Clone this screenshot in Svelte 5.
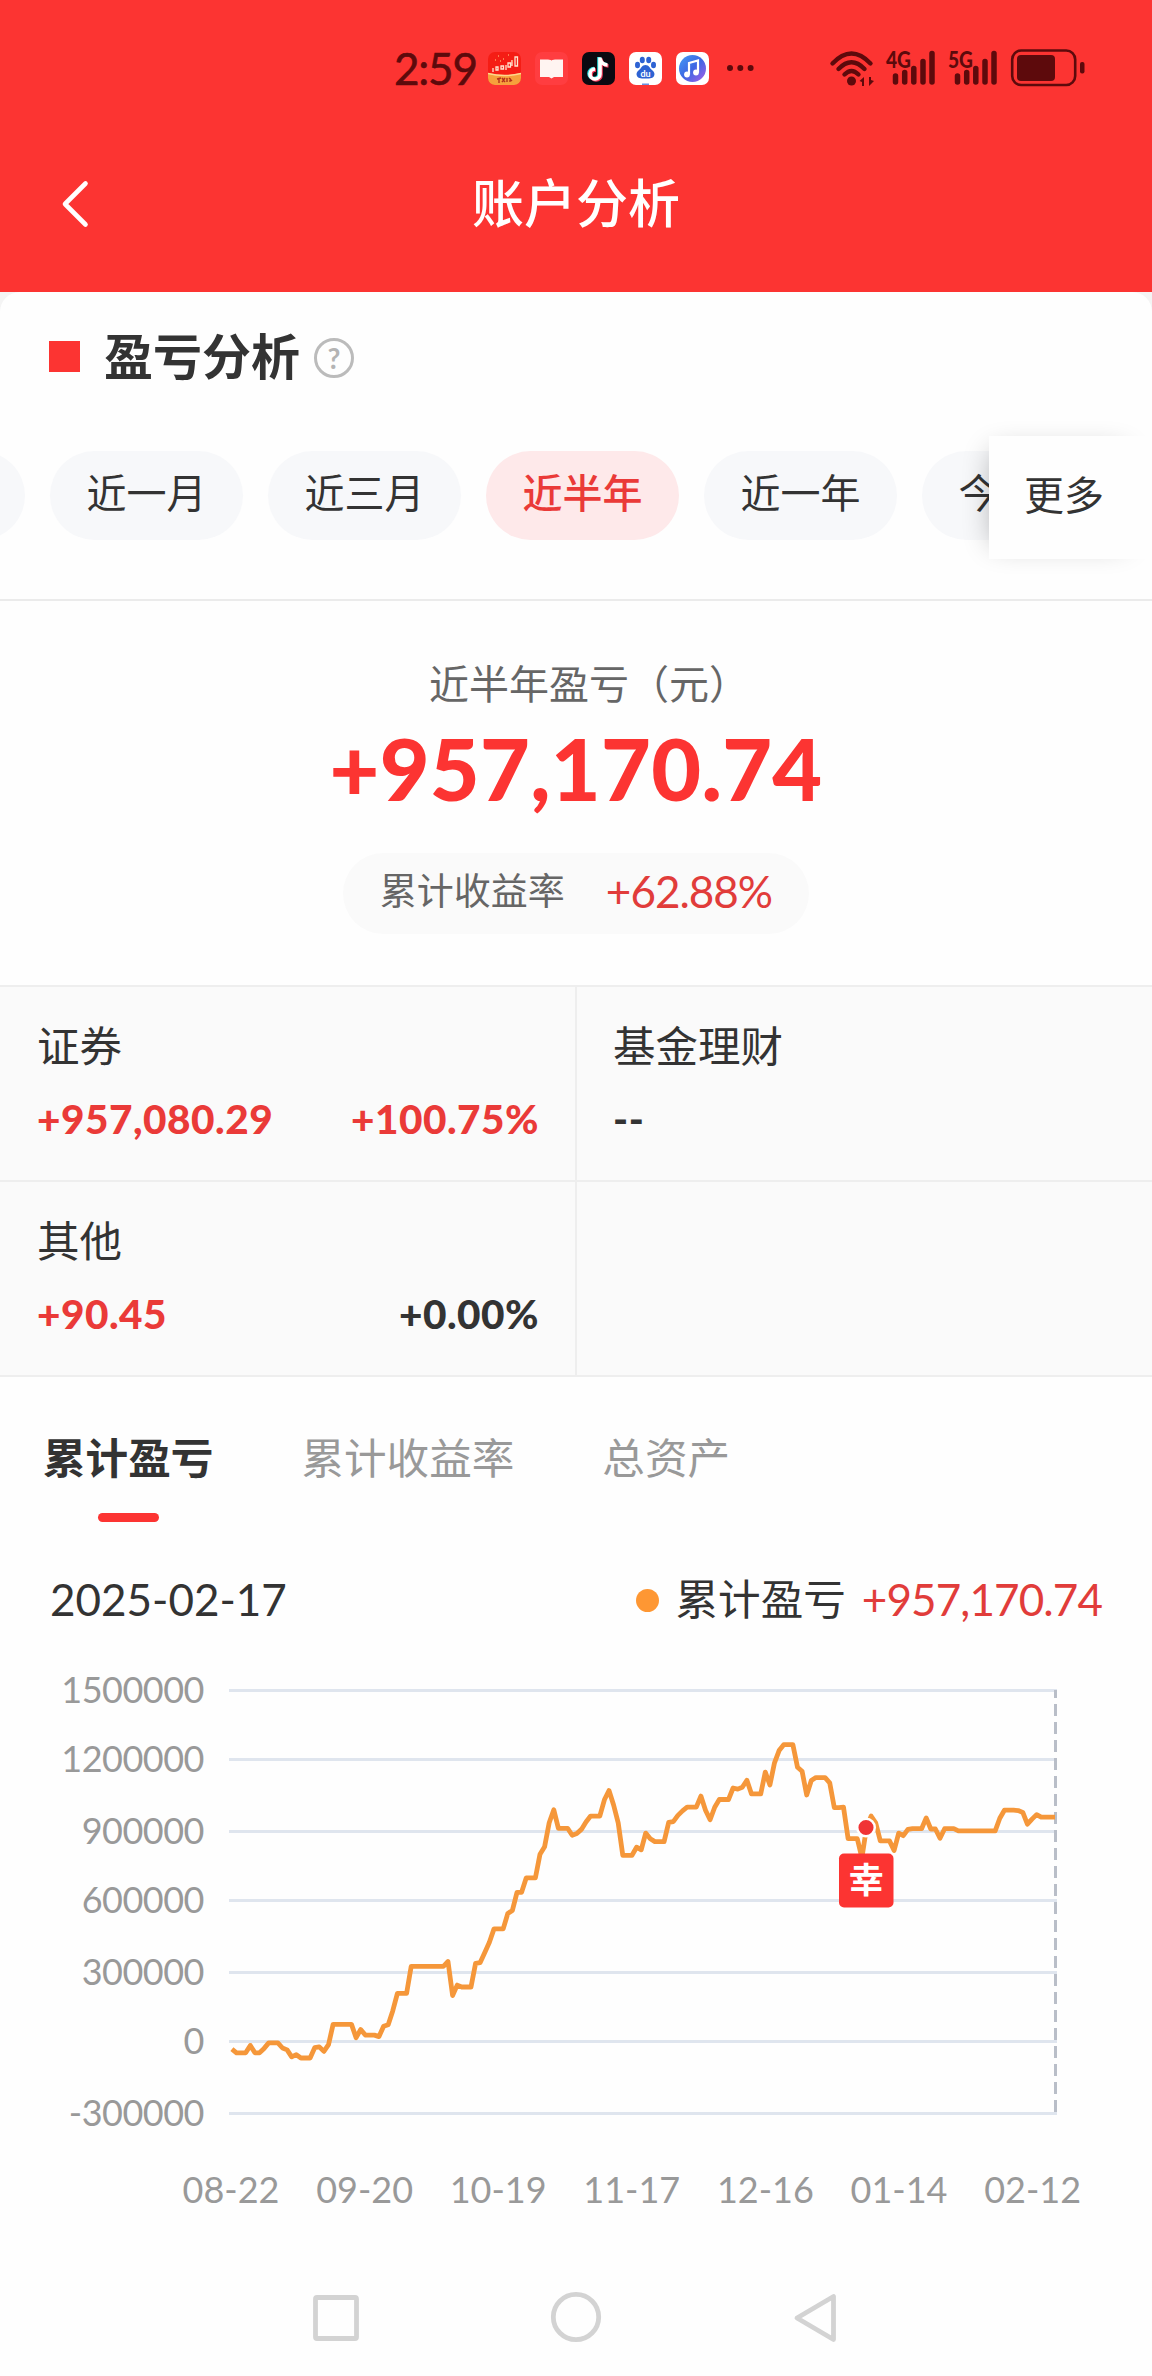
<script>
  const ranges = [
    { label: '' },
    { label: '近一月' },
    { label: '近三月' },
    { label: '近半年', active: true },
    { label: '近一年' },
    { label: '今年来' }
  ];

  const cells = [
    { name: '证券', amount: '+957,080.29', rate: '+100.75%', up: true, rateUp: true },
    { name: '基金理财', amount: '--' },
    { name: '其他', amount: '+90.45', rate: '+0.00%', up: true },
    null
  ];

  const tabs = ['累计盈亏', '累计收益率', '总资产'];

  const yTicks = [
    { label: '1500000', y: 30.5 },
    { label: '1200000', y: 99.5 },
    { label: '900000', y: 171.5 },
    { label: '600000', y: 240.5 },
    { label: '300000', y: 312.5 },
    { label: '0', y: 381.5 },
    { label: '-300000', y: 453.5 }
  ];
  const xTicks = ['08-22', '09-20', '10-19', '11-17', '12-16', '01-14', '02-12'];

  // One level per day, measured downwards from the top of the chart.
  const levels = [
    1052, 1062, 1062, 1062, 1042, 1062, 1062, 1050, 1035, 1035, 1035, 1049, 1054, 1073, 1067, 1076, 1076, 1076,
    1048, 1046, 1058, 1040, 985, 985, 985, 985, 985, 1021, 999, 1014, 1014, 1014, 1018, 990, 986, 948, 901, 901,
    901, 828, 828, 828, 828, 828, 828, 828, 828, 815, 907, 879, 884, 884, 884, 820, 818, 791, 763, 727, 727, 727,
    685, 677, 628, 628, 589, 589, 589, 525, 505, 440, 405, 455, 455, 455, 474, 469, 458, 438, 422, 422, 422, 378,
    353, 392, 440, 528, 528, 528, 506, 513, 468, 483, 491, 491, 491, 439, 437, 420, 408, 398, 398, 398, 368, 406,
    432, 398, 377, 377, 377, 346, 349, 344, 325, 362, 362, 362, 303, 338, 278, 245, 229, 229, 229, 290, 301, 365,
    326, 318, 318, 318, 332, 399, 399, 398, 483, 483, 483, 535, 453, 422, 440, 489, 489, 489, 515, 468, 475, 458,
    456, 456, 456, 427, 457, 457, 482, 456, 456, 456, 462, 462, 462, 462, 462, 462, 462, 462, 462, 428, 406, 406,
    406, 407, 412, 444, 430, 418, 425, 425, 425, 425
  ];
  const left = 231.9;
  const step = (1055 - left) / (levels.length - 1);
  const line = levels.map((v, i) => `${(left + i * step).toFixed(1)},${(v / 2.7034).toFixed(1)}`).join(' ');
</script>

{#snippet signal(kind)}
  <svg class="signal" width="52" height="36" viewBox="0 0 52 36">
    <text x="0" y="17.5" textLength="25" lengthAdjust="spacingAndGlyphs">{kind}</text>
    <path d="M9.500 26v6M18.700 22.500v9.500M27.800 18.500v13.500M37 11.500v20.500M46 3.500v28.500" />
  </svg>
{/snippet}

<div class="page">
  <header>
    <div class="status">
      <span class="time">2:59</span>
      <div class="apps">
        <svg width="33" height="33" viewBox="0 0 33 33">
          <defs><clipPath id="r"><rect width="33" height="33" rx="7" /></clipPath></defs>
          <g clip-path="url(#r)">
            <rect width="33" height="33" fill="#f51d15" />
            <path d="M0 21Q16 25 33 21V33H0Z" fill="#f6a13c" />
            <path d="M0 21.500Q16 25.500 33 21.500" fill="none" stroke="#ffd68c" stroke-width="1.500" />
            <g fill="none" stroke="#ffe4cf" stroke-width="1.300">
              <path d="M5 16v4M8 15h2v3h-2zM13 14h2.500v3h-2.500zM18 13v5M20 11h2.500v4h-2.500zM24 8v6M27 5h2.500v9h-2.500z" />
            </g>
            <path d="M9 27l4-1m-2 0v5m3-5l3 4m0-4l-3 4m5-4v4m2-4l3 3m-2-3v4" stroke="#b3301b" stroke-width="1.400" fill="none" />
            <path d="M10 4h1m4 3h1m4-4h1m-9 6h1m-6-1h1m16 1h1" stroke="#ff9a62" stroke-width="1.400" />
          </g>
        </svg>
        <svg width="33" height="33" viewBox="0 0 33 33">
          <rect width="33" height="33" rx="7" fill="#ff3d40" />
          <path d="M5 7.500h8q3.500 0 3.500 1.500q0-1.500 3.500-1.500h8V25h-9l-2.500 1.500L14 25H5z" fill="#fff4f1" />
        </svg>
        <svg width="33" height="33" viewBox="0 0 33 33">
          <rect width="33" height="33" rx="7" fill="#0b0911" />
          <g fill="none" stroke-width="3.600">
            <path d="M17 5v16.500a5 5 0 1 1-5-5M17 6q1 6 7.500 6.500" stroke="#2bdfe0" />
            <path d="M19 6.500V23a5 5 0 1 1-5-5M19 7.500q1 6 7.500 6.500" stroke="#f43b5c" />
            <path d="M18 5.500V22a5 5 0 1 1-5-5M18 6.500q1 6 7.500 6.500" stroke="#fff" />
          </g>
        </svg>
        <svg width="33" height="33" viewBox="0 0 33 33">
          <rect width="33" height="33" rx="7" fill="#fff" />
          <g fill="#2d62d3">
            <ellipse cx="8.500" cy="13" rx="2.500" ry="3.200" />
            <ellipse cx="13.300" cy="8" rx="2.500" ry="3.200" />
            <ellipse cx="19.700" cy="8" rx="2.500" ry="3.200" />
            <ellipse cx="24.500" cy="13" rx="2.500" ry="3.200" />
            <path d="M16.500 13c3.500 0 4 3 6.500 5s3 4 2 6-3 2.500-8.500 2.500S9 26 8 24s-.5-4 2-6 3-5 6.500-5z" />
            <rect x="13" y="31.500" width="7" height="1.500" opacity=".7" />
          </g>
          <text x="16.500" y="24.500" class="du">du</text>
        </svg>
        <svg width="33" height="33" viewBox="0 0 33 33">
          <defs>
            <linearGradient id="m" x1="0" y1="0" x2="1" y2="1">
              <stop offset="0" stop-color="#459bf5" /><stop offset=".5" stop-color="#3e66e3" /><stop offset="1" stop-color="#a85fe8" />
            </linearGradient>
          </defs>
          <rect width="33" height="33" rx="7" fill="#fff" />
          <circle cx="16.500" cy="16.500" r="13.500" fill="url(#m)" />
          <path d="M13 22.500V11l9-2.500v12" fill="none" stroke="#fff" stroke-width="2.200" />
          <circle cx="11" cy="22.500" r="2.900" fill="#fff" /><circle cx="20" cy="20.500" r="2.900" fill="#fff" />
        </svg>
        <svg class="dots" width="28" height="8" viewBox="0 0 28 8">
          <circle cx="4" cy="4" r="3" /><circle cx="14.300" cy="4" r="3" /><circle cx="24.600" cy="4" r="3" />
        </svg>
      </div>
      <div class="system">
        <svg class="wifi" width="46" height="36" viewBox="0 0 46 36">
          <g fill="none" stroke-width="4.400" stroke-linecap="round">
            <path d="M2.500 13.500Q21.500-6.500 40.500 13.500" />
            <path d="M8.500 19Q21.500 5.500 34.500 19" />
            <path d="M14.500 24.500Q21.500 17.500 28.500 24.500" />
          </g>
          <circle cx="21.500" cy="31" r="4.500" />
          <path d="M29.500 31l4.500-4v9h-2v-4zM44 31l-5 5v-9h2v3z" />
        </svg>
        {@render signal('4G')}
        {@render signal('5G')}
        <svg class="battery" width="76" height="38" viewBox="0 0 76 38">
          <rect x="2.200" y="1.500" width="63" height="34.500" rx="9" fill="none" stroke="#5d0a0c" stroke-width="2.600" />
          <rect x="7" y="6" width="38" height="26" rx="4" />
          <rect x="70" y="13" width="4.500" height="11.500" rx="2" />
        </svg>
      </div>
    </div>
    <div class="bar">
      <svg class="back" width="30" height="50" viewBox="0 0 30 50">
        <path d="M25.500 4.500L5 25l20.500 20.500" fill="none" stroke="#fff" stroke-width="4.600" stroke-linecap="round" stroke-linejoin="round" />
      </svg>
      <h1>账户分析</h1>
    </div>
  </header>

  <main>
    <section class="top">
      <div class="heading">
        <i></i>
        <h2>盈亏分析</h2>
        <span class="help">?</span>
      </div>
      <div class="ranges">
        <div class="viewport">
          <div class="scroller">
            {#each ranges as r}
              <button class="chip" class:active={r.active}>{r.label}</button>
            {/each}
          </div>
        </div>
        <button class="more">更多</button>
      </div>
    </section>

    <section class="summary">
      <p class="caption">近半年盈亏（元）</p>
      <p class="total">+957,170.74</p>
      <p class="pill"><span>累计收益率</span><b>+62.88%</b></p>
    </section>

    <section class="grid">
      {#each cells as c}
        <div class="cell">
          {#if c}
            <h3>{c.name}</h3>
            <div class="values">
              <span class:up={c.up}>{c.amount}</span>
              <span class:up={c.rateUp}>{c.rate ?? ''}</span>
            </div>
          {/if}
        </div>
      {/each}
    </section>

    <nav class="tabs">
      {#each tabs as t, i}
        <button class="tab" class:current={i === 0}>{t}</button>
      {/each}
    </nav>

    <div class="legend">
      <span class="date">2025-02-17</span>
      <i></i>
      <span class="series">累计盈亏</span>
      <span class="amount">+957,170.74</span>
    </div>

    <svg class="chart" width="1152" height="580" viewBox="0 0 1152 580">
      {#each yTicks as t}
        <line x1="229" x2="1057" y1={t.y} y2={t.y} class="rule" />
        <text x="204" y={t.y + 12} text-anchor="end" class="level">{t.label}</text>
      {/each}
      <line x1="1055.500" x2="1055.500" y1="452" y2="30" class="cursor" />
      {#each xTicks as t, i}
        <text x={231 + i * 133.6} y="543" text-anchor="middle">{t}</text>
      {/each}
      <polyline points={line} />
      <circle cx="866" cy="167.500" r="8.800" class="point" />
      <rect x="839" y="193.500" width="54.500" height="54" rx="5" class="badge" />
      <text x="866.200" y="232.500" text-anchor="middle" class="mark">幸</text>
    </svg>
  </main>

  <footer>
    <svg width="52" height="52" viewBox="0 0 52 52"><rect x="5.500" y="5.500" width="41" height="41" rx="1.500" /></svg>
    <svg width="52" height="52" viewBox="0 0 52 52"><circle cx="26" cy="25" r="22.700" /></svg>
    <svg width="52" height="52" viewBox="0 0 52 52"><path d="M43.500 4.500V47.500L7 26Z" /></svg>
  </footer>
</div>

<style>
  :global(body) {
    margin: 0;
    background: #fefefe;
  }
  .page {
    width: 1152px;
    height: 2376px;
    overflow: hidden;
    background: #fefefe;
    color: #333;
    font-family: Lato, 'Noto Sans CJK SC', sans-serif;
  }
  h1, h2, h3, p {
    margin: 0;
    font-weight: 400;
  }
  button {
    border: 0;
    padding: 0;
    background: none;
    font: inherit;
    color: inherit;
    white-space: nowrap;
  }
  svg {
    display: block;
    flex: none;
    overflow: visible;
  }

  header {
    height: 292px;
    background: #fc3432;
    color: #fff;
  }
  .status {
    display: flex;
    align-items: center;
    height: 136px;
    padding: 0 66px 0 394px;
    color: #5d0a0c;
    fill: #5d0a0c;
  }
  .time {
    width: 94px;
    font-size: 44px;
    letter-spacing: -1.2px;
    line-height: 60px;
    white-space: nowrap;
    -webkit-text-stroke: 0.6px #5d0a0c;
  }
  .apps {
    display: flex;
    align-items: center;
    gap: 14px;
  }
  .apps .dots {
    margin-left: 3px;
  }
  .du {
    font: 700 9px Lato, sans-serif;
    fill: #fff;
    text-anchor: middle;
  }
  .system {
    display: flex;
    align-items: center;
    margin-left: auto;
  }
  .wifi {
    stroke: #5d0a0c;
    margin-right: 10px;
  }
  .wifi circle, .wifi > path {
    stroke: none;
  }
  .signal {
    margin-right: 10px;
  }
  .signal text {
    font: 900 22px Lato, sans-serif;
  }
  .signal path {
    stroke: #5d0a0c;
    stroke-width: 5.5px;
    stroke-linecap: round;
  }
  .bar {
    display: grid;
    grid-template-columns: 100px 1fr 100px;
    align-items: center;
    height: 136px;
  }
  .back {
    margin-left: 60px;
  }
  h1 {
    margin-top: -3px;
    font-size: 52px;
    font-weight: 500;
    line-height: 80px;
    text-align: center;
  }

  main {
    background: #f4f4f4;
  }
  .top {
    height: 309px;
    box-sizing: border-box;
    border-bottom: 2px solid #ebebeb;
    border-radius: 20px 20px 0 0;
    background: #fefefe;
  }
  .heading {
    display: flex;
    align-items: center;
    height: 128px;
    padding: 0 0 2px 49px;
    box-sizing: content-box;
  }
  .heading i {
    width: 31px;
    height: 31px;
    background: #fc3432;
  }
  h2 {
    margin: 0 14px 0 24px;
    font-size: 49px;
    font-weight: 700;
    line-height: 70px;
  }
  .help {
    width: 34px;
    height: 34px;
    margin-top: 4px;
    border: 3px solid #bbb;
    border-radius: 50%;
    color: #b4b4b4;
    font-size: 28px;
    font-weight: 700;
    line-height: 34px;
    text-align: center;
  }
  .ranges {
    position: relative;
    display: flex;
    height: 147px;
    align-items: center;
  }
  .viewport {
    width: 989px;
    overflow: hidden;
  }
  .scroller {
    display: flex;
    gap: 25px;
    margin-left: -168px;
  }
  .chip {
    flex: none;
    width: 193px;
    height: 89px;
    padding-bottom: 5px;
    border-radius: 45px;
    background: #f7f8fa;
    font-size: 40px;
    line-height: 84px;
  }
  .chip.active {
    background: #fee9ea;
    color: #ea3a38;
    font-weight: 500;
  }
  .more {
    position: absolute;
    top: 14px;
    right: 0;
    width: 163px;
    height: 123px;
    padding: 0 13px 10px 0;
    box-sizing: border-box;
    background: #fefefe;
    box-shadow: -12px 0 30px -16px rgba(0, 0, 0, 0.32);
    font-size: 40px;
  }

  .summary {
    display: flex;
    flex-direction: column;
    align-items: center;
    height: 384px;
    padding-top: 53px;
    box-sizing: border-box;
    background: #fefefe;
  }
  .caption {
    margin-right: -26px;
    font-size: 40px;
    line-height: 60px;
    color: #666;
  }
  .total {
    margin-top: 9px;
    font-size: 86px;
    font-weight: 900;
    letter-spacing: 0.3px;
    line-height: 90px;
    color: #fc3432;
  }
  .pill {
    display: flex;
    justify-content: center;
    align-items: center;
    gap: 41px;
    width: 466px;
    height: 81px;
    margin-top: 40px;
    padding-bottom: 6px;
    box-sizing: border-box;
    border-radius: 41px;
    background: #fafafa;
    color: #666;
    font-size: 37px;
    line-height: 60px;
  }
  .pill b {
    color: #e13c3a;
    font-size: 44px;
    font-weight: 400;
    letter-spacing: -1px;
  }

  .grid {
    display: grid;
    grid-template-columns: 575px 575px;
    grid-auto-rows: 193px;
    gap: 2px;
    padding: 2px 0;
    background: #eee;
  }
  .cell {
    padding: 34px 36px 0 37px;
    background: #fafafa;
  }
  .cell:nth-child(even) {
    padding-left: 36px;
  }
  h3 {
    font-size: 42.5px;
    line-height: 50px;
  }
  .values {
    display: flex;
    justify-content: space-between;
    margin-top: 23px;
    font-size: 40.5px;
    font-weight: 900;
    letter-spacing: 0.5px;
    line-height: 50px;
  }
  .values .up {
    color: #ea3a38;
  }

  .tabs {
    display: flex;
    gap: 88px;
    height: 152px;
    padding: 51px 0 0 43px;
    box-sizing: border-box;
    background: #fefefe;
  }
  .tab {
    display: flex;
    flex-direction: column;
    align-items: center;
    height: 95px;
    font-size: 42.6px;
    line-height: 60px;
    color: #999;
  }
  .tab.current {
    color: #333;
    font-weight: 700;
  }
  .tab.current::after {
    content: '';
    width: 61px;
    height: 9px;
    margin-top: 25px;
    border-radius: 5px;
    background: #fc3432;
  }

  .legend {
    display: flex;
    align-items: center;
    height: 131px;
    padding: 9px 50px 0;
    box-sizing: border-box;
    background: #fefefe;
    font-size: 44px;
    line-height: 60px;
  }
  .legend i {
    width: 23px;
    height: 23px;
    margin: 2px 16px 0 auto;
    border-radius: 50%;
    background: #fe9733;
  }
  .legend .series {
    margin-right: 16px;
    font-size: 42.6px;
  }
  .legend .amount {
    color: #e13c3a;
    letter-spacing: -0.9px;
  }

  .chart {
    background: #fefefe;
    font-size: 36px;
    fill: #999;
  }
  .level {
    letter-spacing: -0.5px;
  }
  .rule {
    stroke: #dfe5ee;
    stroke-width: 3px;
  }
  .cursor {
    stroke: #b9bec8;
    stroke-width: 3px;
    stroke-dasharray: 12 6;
  }
  polyline {
    fill: none;
    stroke: #f5973a;
    stroke-width: 4.8px;
    stroke-linejoin: round;
  }
  .point {
    fill: #f03335;
    stroke: #fff;
    stroke-width: 2.5px;
  }
  .badge {
    fill: #fc3432;
  }
  .mark {
    fill: #fff;
    font-size: 35px;
    font-weight: 700;
  }

  footer {
    display: flex;
    justify-content: center;
    gap: 188px;
    height: 136px;
    padding-top: 52px;
    box-sizing: border-box;
    background: #fefefe;
  }
  footer svg {
    fill: none;
    stroke: #d3d3d3;
    stroke-width: 4.8px;
    stroke-linejoin: round;
  }
</style>
